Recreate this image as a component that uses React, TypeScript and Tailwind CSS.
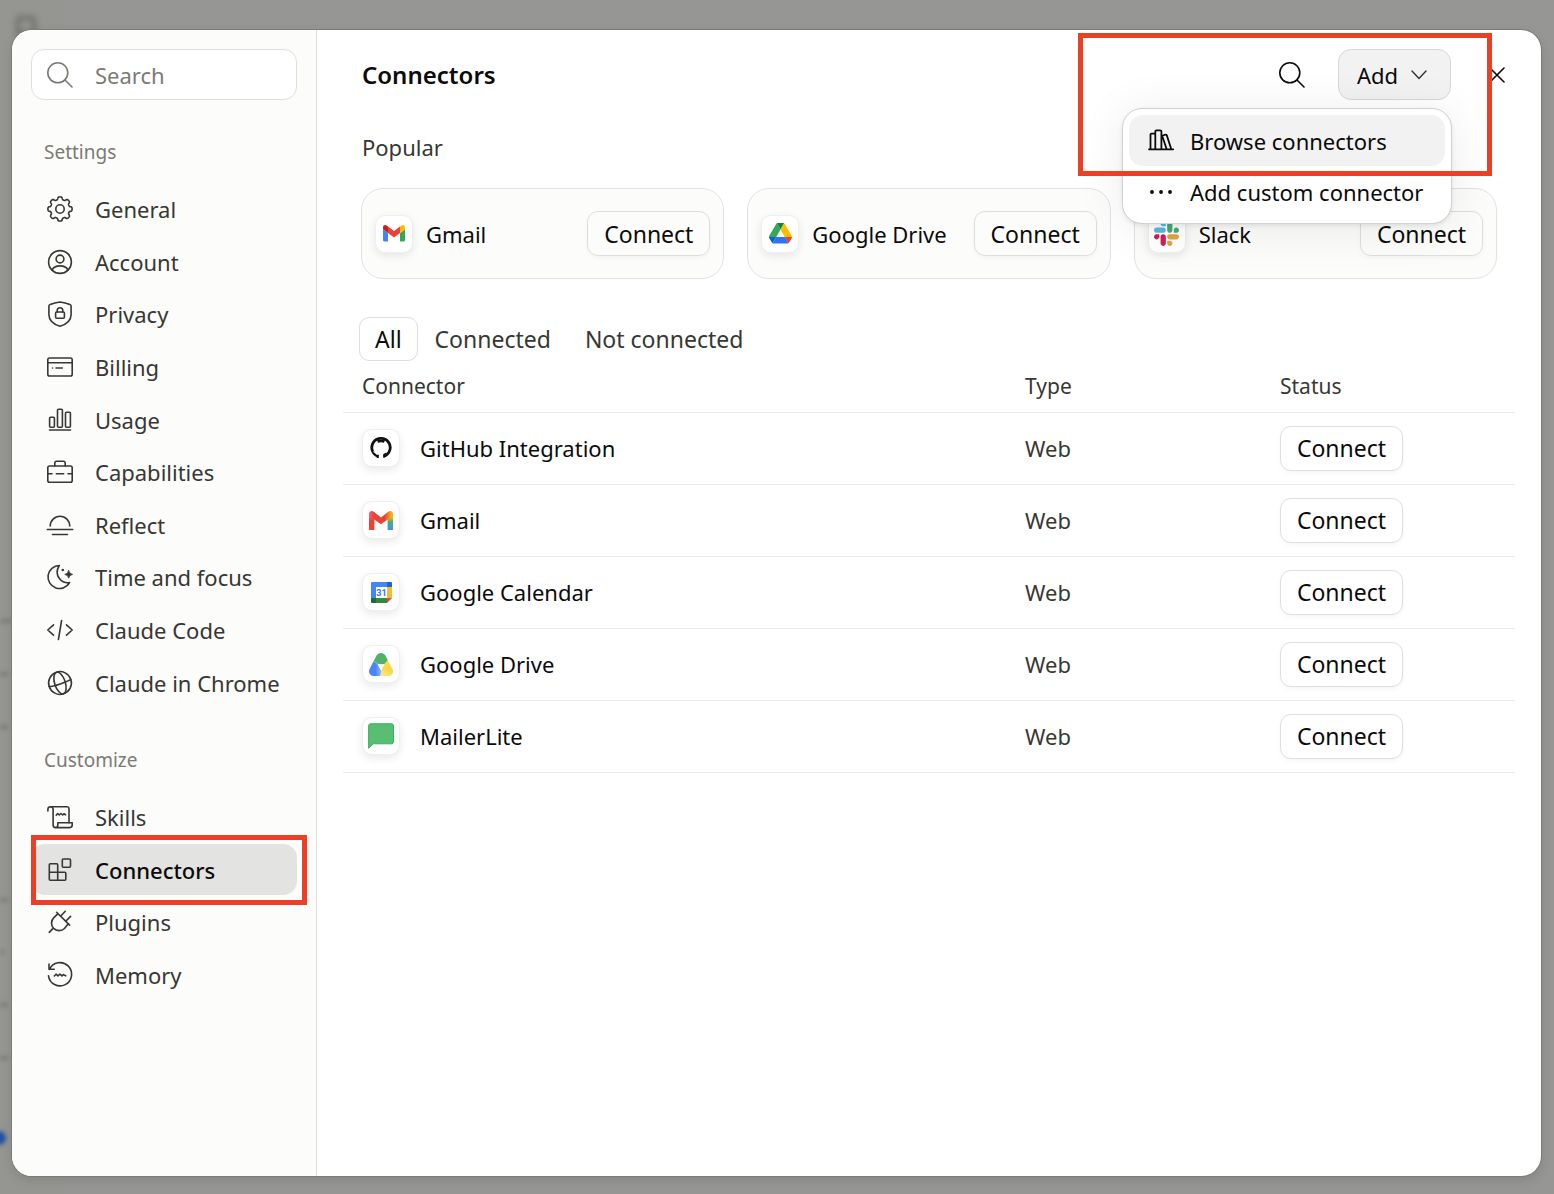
import React from "react";

type NavEntry = { label: string; icon: React.ReactNode; active?: boolean };
type ConnectorRow = { name: string; logo: React.ReactNode };

function Line({ children }: { children: React.ReactNode }) {
  return (
    <svg
      viewBox="0 0 28 28"
      className="size-7 shrink-0"
      fill="none"
      stroke="currentColor"
      strokeWidth="1.6"
      strokeLinecap="round"
      strokeLinejoin="round"
      aria-hidden="true"
    >
      {children}
    </svg>
  );
}

// eight soft teeth around the hub
const gearPoints = Array.from({ length: 192 }, (_, i) => {
  const a = (i / 192) * Math.PI * 2;
  const r = 10.8 + 1.3 * Math.tanh(2.2 * Math.cos(8 * a) + 0.2);
  return `${(14 + r * Math.cos(a)).toFixed(2)},${(14 + r * Math.sin(a)).toFixed(2)}`;
}).join(" ");

const settingsNav: NavEntry[] = [
  {
    label: "General",
    icon: (
      <Line>
        <polygon points={gearPoints} />
        <circle cx="14" cy="14" r="4.2" />
      </Line>
    ),
  },
  {
    label: "Account",
    icon: (
      <Line>
        <circle cx="14" cy="14" r="11.4" />
        <circle cx="14" cy="11" r="3.9" />
        <path d="M6.200 22c1-2.700 4-4.100 7.800-4.100s6.800 1.400 7.800 4.100" />
      </Line>
    ),
  },
  {
    label: "Privacy",
    icon: (
      <Line>
        <path d="M14 2c3.400.4 7 1.300 9.900 2.500a1.800 1.800 0 0 1 1.200 1.700v8.300c0 5.500-4.500 9.700-11.100 11.800C7.400 24.200 2.900 20 2.900 14.500V6.200a1.800 1.800 0 0 1 1.200-1.700C7 3.300 10.600 2.400 14 2z" />
        <rect x="9.600" y="12" width="8.800" height="6.300" rx="1" />
        <path d="M11.200 12v-1.500a2.800 2.800 0 0 1 5.600 0V12" />
      </Line>
    ),
  },
  {
    label: "Billing",
    icon: (
      <Line>
        <rect x="1.800" y="5" width="24.400" height="18" rx="1.800" />
        <path d="M1.800 9.700h24.400M10 15h6.300M6.500 15h.01" />
      </Line>
    ),
  },
  {
    label: "Usage",
    icon: (
      <Line>
        <rect x="3.600" y="11.200" width="4.800" height="10" rx="1" />
        <rect x="11.500" y="3.200" width="4.900" height="18" rx="1" />
        <rect x="19.500" y="6.300" width="4.900" height="14.900" rx="1" />
        <path d="M3.500 24h21" />
      </Line>
    ),
  },
  {
    label: "Capabilities",
    icon: (
      <Line>
        <rect x="1.800" y="8" width="24.400" height="16.300" rx="1.800" />
        <path d="M8.800 8V5a1.800 1.800 0 0 1 1.800-1.800h6.800A1.800 1.800 0 0 1 19.200 5v3M2 15.700h4M10.300 15.700h7.400M22 15.700h4" />
      </Line>
    ),
  },
  {
    label: "Reflect",
    icon: (
      <Line>
        <path d="M4.200 15a9.800 9.800 0 0 1 19.600 0M1.300 18.500h25.400M6.500 23.500h15" />
      </Line>
    ),
  },
  {
    label: "Time and focus",
    icon: (
      <Line>
        <path d="M13.300 2.500A11.500 11.500 0 1 0 23.600 19.500C16.500 20.800 6.800 13 13.300 2.500z" />
        <path d="M22.700 7.600q.5 3.300 3.900 3.800-3.400.5-3.900 3.800-.5-3.300-3.900-3.800 3.400-.5 3.900-3.800z" fill="currentColor" strokeWidth=".8" />
        <circle cx="16.800" cy="7" r="1.300" fill="currentColor" stroke="none" />
      </Line>
    ),
  },
  {
    label: "Claude Code",
    icon: (
      <Line>
        <path d="M7.500 8.800 1.800 14l5.700 5.200M20.500 8.800l5.700 5.200-5.700 5.200M15.600 4.500l-3.200 19" />
      </Line>
    ),
  },
  {
    label: "Claude in Chrome",
    icon: (
      <Line>
        <g transform="rotate(-18 14 14)">
          <circle cx="14" cy="14" r="11.4" />
          <ellipse cx="14" cy="14" rx="5.300" ry="11.4" />
          <path d="M2.600 14c4 1.300 18.800 1.300 22.800 0" />
        </g>
      </Line>
    ),
  },
];

const customizeNav: NavEntry[] = [
  {
    label: "Skills",
    icon: (
      <Line>
        <path d="M1.900 8V6.300a2.600 2.600 0 0 1 5.200 0V22a2.600 2.600 0 0 0 2.600 2.600h14a2.500 2.500 0 0 0 2.500-2.500v-2.400H11.800V22a2.400 2.400 0 0 1-2.100 2.600" />
        <path d="M4.500 3.700H21a2 2 0 0 1 2 2v14M10.200 12.200l1.500-1.700 1.600 1.500 1.700-1.500 1.700 1.500 1.200-1.200 1.600 1" />
      </Line>
    ),
  },
  {
    label: "Connectors",
    active: true,
    icon: (
      <Line>
        <g stroke="#373734">
          <path d="M3.300 8.800a1 1 0 0 1 1-1h6.400a1 1 0 0 1 1 1v7.400h7.100a1 1 0 0 1 1 1v6.100a1 1 0 0 1-1 1H4.300a1 1 0 0 1-1-1zM3.300 16.200h8.400v8.100" />
          <rect x="16.300" y="3" width="8.200" height="8.200" rx="1" />
        </g>
      </Line>
    ),
  },
  {
    label: "Plugins",
    icon: (
      <Line>
        <path d="M3.300 24.400l3.200-3.500M10.600 4.300l13 12.800M12 5.700 7.900 9.600a7.700 7.700 0 0 0-.3 10.800 7.800 7.800 0 0 0 10.900.1l3.700-4.800M14.500 8.200l4.800-4.900M19.700 13.300l4.900-4.900" />
      </Line>
    ),
  },
  {
    label: "Memory",
    icon: (
      <Line>
        <path d="M3 3v5.300h5.200M3.500 8.300A11.600 11.600 0 1 1 2.500 14.800M8.300 15l1.700-1.800 1.900 1.700 2-1.700 2 1.700 1.500-1.300 2.300 1.200" />
      </Line>
    ),
  },
];

function SearchIcon() {
  return (
    <Line>
      <circle cx="11.800" cy="11.800" r="10" />
      <path d="M19 19l7 7" />
    </Line>
  );
}

function GitHub() {
  return (
    <svg viewBox="0 0 22 22" className="w-[22px]" fill="none" aria-hidden="true">
      <path stroke="#111" strokeWidth="2.8" d="M8.200 19.300A9.200 9.200 0 1 1 13.800 19.300" />
      <path fill="#111" d="M7 3h8l-1 2.700q-3-.7-6 0zM6.800 21v-3.500l2 .2V21zM13.200 21v-3.800l3-1.700 1 3z" />
      <path stroke="#fff" strokeWidth="1" d="M3.300 14.600c2 .2 1.800 3 4.600 2.700" />
    </svg>
  );
}

function GmailClassic() {
  return (
    <svg viewBox="52 42 88 66" className="w-[22px]" aria-hidden="true">
      <path fill="#4285f4" d="M58 108h14V74L52 59v43c0 3.320 2.690 6 6 6" />
      <path fill="#34a853" d="M120 108h14c3.320 0 6-2.690 6-6V59l-20 15" />
      <path fill="#fbbc04" d="M120 48v26l20-15v-8c0-7.420-8.470-11.650-14.400-7.200" />
      <path fill="#ea4335" d="M72 74V48l24 18 24-18v26L96 92" />
      <path fill="#c5221f" d="M52 51v8l20 15V48l-5.600-4.200c-5.940-4.450-14.400-.22-14.400 7.200" />
    </svg>
  );
}

function DriveClassic() {
  return (
    <svg viewBox="0 0 87.3 78" className="w-[23px]" aria-hidden="true">
      <path fill="#0066da" d="m6.6 66.85 3.850 6.650c.8 1.400 1.950 2.500 3.300 3.300l13.750-23.800h-27.500c0 1.550.4 3.100 1.200 4.500z" />
      <path fill="#34a853" d="m43.650 25-13.750-23.800c-1.350.8-2.500 1.900-3.300 3.300l-25.400 44a9.060 9.060 0 0 0-1.200 4.500h27.500z" />
      <path fill="#ea4335" d="m73.550 76.800c1.350-.8 2.500-1.900 3.300-3.300l1.600-2.750 7.650-13.250c.8-1.400 1.200-2.950 1.200-4.500h-27.500l5.850 11.500z" />
      <path fill="#188038" d="m43.650 25 13.750-23.800c-1.350-.8-2.900-1.200-4.500-1.200h-18.500c-1.600 0-3.150.45-4.500 1.200z" />
      <path fill="#2f73ee" d="m59.800 53h-32.300l-13.750 23.800c1.350.8 2.900 1.200 4.500 1.200h50.800c1.600 0 3.150-.45 4.500-1.200z" />
      <path fill="#fbbc04" d="m73.400 26.500-12.700-22c-.8-1.400-1.950-2.500-3.300-3.300l-13.750 23.800 16.150 28h27.450c0-1.550-.4-3.100-1.200-4.500z" />
    </svg>
  );
}

function Slack() {
  return (
    <svg viewBox="0 0 122.8 122.8" className="w-[25px]" aria-hidden="true">
      <path fill="#cf1f56" d="M25.800 77.600c0 7.100-5.800 12.900-12.900 12.900S0 84.700 0 77.600s5.800-12.900 12.900-12.900h12.900v12.900zm6.500 0c0-7.100 5.800-12.900 12.900-12.900s12.900 5.800 12.900 12.900v32.300c0 7.100-5.800 12.900-12.900 12.900s-12.900-5.800-12.900-12.900V77.600z" />
      <path fill="#56b9e2" d="M45.200 25.800c-7.100 0-12.900-5.800-12.900-12.900S38.100 0 45.200 0s12.900 5.800 12.900 12.900v12.900H45.200zm0 6.500c7.100 0 12.900 5.800 12.900 12.900s-5.800 12.900-12.900 12.900H12.900C5.800 58.100 0 52.300 0 45.200s5.800-12.900 12.900-12.900h32.300z" />
      <path fill="#4aa978" d="M97 45.200c0-7.100 5.800-12.900 12.900-12.900s12.900 5.800 12.900 12.900-5.800 12.900-12.900 12.900H97V45.200zm-6.500 0c0 7.100-5.800 12.900-12.900 12.900s-12.900-5.800-12.900-12.900V12.900C64.700 5.800 70.500 0 77.600 0s12.900 5.800 12.900 12.900v32.300z" />
      <path fill="#dba73f" d="M77.600 97c7.100 0 12.900 5.800 12.900 12.900s-5.800 12.900-12.900 12.900-12.900-5.800-12.900-12.900V97h12.900zm0-6.500c-7.100 0-12.900-5.800-12.900-12.900s5.800-12.900 12.900-12.900h32.300c7.100 0 12.900 5.800 12.900 12.900s-5.800 12.900-12.900 12.900H77.600z" />
    </svg>
  );
}

function GmailGradient() {
  return (
    <svg viewBox="0 0 24 19" className="w-6" aria-hidden="true">
      <defs>
        <linearGradient id="gm-left" x1="0" y1="0" x2="0" y2="1">
          <stop offset="0" stopColor="#f06aa0" />
          <stop offset=".4" stopColor="#ea4335" />
        </linearGradient>
        <linearGradient id="gm-right" x1="0" y1="0" x2="0" y2="1">
          <stop offset=".15" stopColor="#fbbc04" />
          <stop offset=".5" stopColor="#4fae6a" />
          <stop offset=".9" stopColor="#4a8cf7" />
        </linearGradient>
        <linearGradient id="gm-fold" x1="0" y1="0" x2="1" y2="0">
          <stop offset="0" stopColor="#ee5f8a" />
          <stop offset=".2" stopColor="#ea4335" />
          <stop offset=".65" stopColor="#ea4335" />
          <stop offset=".95" stopColor="#fbb11a" />
        </linearGradient>
      </defs>
      <path fill="url(#gm-left)" d="M0 3h5.400v15.400a.6.6 0 0 1-.6.6H.6a.6.6 0 0 1-.6-.6z" />
      <path fill="url(#gm-right)" d="M18.600 3H24v15.400a.6.6 0 0 1-.6.6h-4.200a.6.6 0 0 1-.6-.6z" />
      <path fill="url(#gm-fold)" d="M0 3.200C0 .4 2.800-.8 4.800.8L12 6.600 19.200.8C21.200-.8 24 .4 24 3.200c0 1.100-.5 1.900-1.300 2.500L12 13.300 1.300 5.700C.5 5.100 0 4.300 0 3.200z" />
    </svg>
  );
}

function Calendar() {
  return (
    <svg viewBox="0 0 21 21" className="w-[21px]" aria-hidden="true">
      <path fill="#4285f4" d="M1 0H16v5H5v11H0V1a1 1 0 0 1 1-1z" />
      <path fill="#1f62d0" d="M16 0h4a1 1 0 0 1 1 1v4h-5z" />
      <path fill="#f5bb30" d="M16 5h5v11h-5z" />
      <path fill="#1d6b37" d="M0 16h5v5H1a1 1 0 0 1-1-1z" />
      <path fill="#34893f" d="M5 16h11v5H5z" />
      <path fill="#e2483a" d="M16 16h5l-5 5z" />
      <path fill="#fff" d="M5 5h11v11H5z" />
      <text x="10.500" y="13.700" textAnchor="middle" fontSize="9" fontWeight="700" fontFamily="Roboto" fill="#2f73ee">
        31
      </text>
    </svg>
  );
}

function DriveGradient() {
  return (
    <svg viewBox="0 0 24 23" className="w-6" aria-hidden="true">
      <defs>
        <linearGradient id="dr-top" x1="0" y1="1" x2=".6" y2=".3">
          <stop offset="0" stopColor="#62c1d0" />
          <stop offset=".45" stopColor="#4fb268" />
        </linearGradient>
        <linearGradient id="dr-blue" x1="0" y1="0" x2="1" y2="0">
          <stop offset=".5" stopColor="#4a86f7" />
          <stop offset="1" stopColor="#9cc3fb" />
        </linearGradient>
        <linearGradient id="dr-yellow" x1="0" y1="1" x2=".5" y2="0">
          <stop offset="0" stopColor="#fbe9a0" />
          <stop offset=".5" stopColor="#fcd94a" />
        </linearGradient>
      </defs>
      <path fill="url(#dr-top)" d="M7.600 2.600a5.100 5.100 0 0 1 8.800 0L18.900 7.200 15.400 11.300H8.600L4.400 8.600z" />
      <path fill="url(#dr-blue)" d="M4.400 8.600 8.600 11.300 13.200 19 11 23H5A4.800 4.800 0 0 1 .7 15.800z" />
      <path fill="url(#dr-yellow)" d="M18.900 7.200 23.400 15.800A4.800 4.800 0 0 1 19 23h-7.400L12 17.300 15.400 11.300z" />
      <path fill="#fff" d="M8.600 11.300h6.800L12 17.300z" />
    </svg>
  );
}

function Mail() {
  return (
    <svg viewBox="0 0 26 26" className="w-[26px]" aria-hidden="true">
      <path fill="#57be72" stroke="#35b35a" d="M2.500.8h21a2 2 0 0 1 2 2v16a2 2 0 0 1-2 2H5.300L.6 25.200V2.800a2 2 0 0 1 2-2z" />
    </svg>
  );
}

const popular: ConnectorRow[] = [
  { name: "Gmail", logo: <GmailClassic /> },
  { name: "Google Drive", logo: <DriveClassic /> },
  { name: "Slack", logo: <Slack /> },
];

const connectors: ConnectorRow[] = [
  { name: "GitHub Integration", logo: <GitHub /> },
  { name: "Gmail", logo: <GmailGradient /> },
  { name: "Google Calendar", logo: <Calendar /> },
  { name: "Google Drive", logo: <DriveGradient /> },
  { name: "MailerLite", logo: <Mail /> },
];

function LogoTile({ children }: { children: React.ReactNode }) {
  return (
    <span className="flex size-[38px] shrink-0 items-center justify-center rounded-[10px] border border-[#efefee] bg-white shadow-[0_3px_8px_rgba(0,0,0,0.09)]">
      {children}
    </span>
  );
}

function ConnectButton({ name }: { name: string }) {
  return (
    <button
      type="button"
      title={`Connect ${name}`}
      className="h-[45px] w-[123px] shrink-0 rounded-[11px] border border-[#dededd] text-[23px] text-[#0b0b0b] shadow-[0_2px_4px_rgba(0,0,0,0.04)]"
    >
      Connect
    </button>
  );
}

function NavGroup({ title, entries, className }: { title: string; entries: NavEntry[]; className: string }) {
  return (
    <section>
      <h2 className="pl-[13px] text-[19px] leading-7 text-[#7b7a75]">{title}</h2>
      <ul className={`mt-[17px] flex flex-col ${className}`}>
        {entries.map((entry) => (
          <li key={entry.label} className="relative flex flex-1 items-center">
            <a
              href="#"
              className={`flex h-[51px] w-full items-center gap-[21px] rounded-[14px] pl-[15px] ${
                entry.active ? "bg-[#e3e3e1] font-medium text-[#0b0b0b]" : "text-[#373734]"
              }`}
            >
              {entry.icon}
              {entry.label}
            </a>
            {entry.active && (
              <span className="pointer-events-none absolute -top-[9px] -right-[10px] -bottom-[9px] left-0 border-5 border-[#ea4025]" />
            )}
          </li>
        ))}
      </ul>
    </section>
  );
}

function Sidebar() {
  return (
    <aside className="w-[305px] shrink-0 border-r border-[#dededd] bg-[#fcfcfa] px-[19px] pt-[19px]">
      <label className="flex h-[51px] items-center gap-[21px] rounded-[13px] border border-[#dededd] bg-white pl-[14px] text-[#7b7a75]">
        <SearchIcon />
        <input type="text" placeholder="Search" aria-label="Search" className="w-full min-w-0 outline-none placeholder:text-[#7b7a75]" />
      </label>
      <nav className="mt-[38px] flex flex-col gap-[37px]">
        <NavGroup title="Settings" entries={settingsNav} className="min-h-[526px]" />
        <NavGroup title="Customize" entries={customizeNav} className="min-h-[210px]" />
      </nav>
    </aside>
  );
}

function AddMenu() {
  return (
    <div className="relative">
      <button
        type="button"
        aria-expanded="true"
        className="flex h-[51px] w-[113px] items-center gap-[13px] rounded-[13px] border border-[#d6d6d5] bg-[#f2f2f2] pl-[18px] text-[#0b0b0b]"
      >
        Add
        <svg viewBox="0 0 16 10" className="w-4" fill="none" stroke="#333" strokeWidth="1.4" strokeLinecap="round" strokeLinejoin="round" aria-hidden="true">
          <path d="M1 1l7 7.500L15 1" />
        </svg>
      </button>
      <div
        role="menu"
        className="absolute top-[59px] -right-px z-10 w-[330px] rounded-[20px] border border-[#d0d0cf] bg-white bg-clip-padding p-[6px] text-[#0b0b0b] shadow-[0_4px_48px_rgba(0,0,0,0.08),0_2px_4px_rgba(0,0,0,0.08)]"
      >
        <button type="button" role="menuitem" className="flex h-[51px] w-full items-center gap-[15px] rounded-[14px] bg-[#f2f2f2] pl-[18px] whitespace-nowrap">
          <Line>
            <path d="M2 22.300h24.200M3.500 22.300V7.600a1 1 0 0 1 1-1h3.800M8.300 22.300V4.500a1.200 1.200 0 0 1 1.200-1.200h3.700a1.200 1.200 0 0 1 1.200 1.200v17.800M14.400 9l4.100-1.300a1 1 0 0 1 1.300.7l4.500 13.900M15.500 9.800l4.200 12.500" strokeWidth="1.8" />
          </Line>
          Browse connectors
        </button>
        <button type="button" role="menuitem" className="flex h-[51px] w-full items-center gap-[15px] rounded-[14px] pl-[18px] whitespace-nowrap">
          <Line>
            <path d="M5 14h.01M14 14h.01M23 14h.01" strokeWidth="3.800" />
          </Line>
          Add custom connector
        </button>
      </div>
    </div>
  );
}

function Header() {
  return (
    <header className="relative flex items-center pt-[19px] pr-5 pl-[45px]">
      <h1 className="flex-1 text-2xl font-semibold text-[#0b0b0b]">Connectors</h1>
      <div className="flex items-center gap-[22px] text-[#0b0b0b]">
        <button type="button" aria-label="Search connectors" className="flex size-12 items-center justify-center">
          <SearchIcon />
        </button>
        <AddMenu />
        <button type="button" aria-label="Close" className="flex size-12 items-center justify-center">
          <svg viewBox="0 0 16 16" className="size-4" stroke="currentColor" strokeWidth="1.6" strokeLinecap="round" aria-hidden="true">
            <path d="M1 1l14 14M15 1L1 15" />
          </svg>
        </button>
      </div>
      <span className="pointer-events-none absolute top-[3px] right-[49px] z-20 h-[143px] w-[414px] border-5 border-[#ea4025]" />
    </header>
  );
}

function ConnectorTable() {
  return (
    <table className="w-full table-fixed border-collapse text-left">
      <thead>
        <tr className="h-[51px] border-b border-[#ebebea] text-[21px] text-[#373734]">
          <th className="pl-[19px] font-normal">Connector</th>
          <th className="w-[255px] font-normal">Type</th>
          <th className="w-[235px] font-normal">Status</th>
        </tr>
      </thead>
      <tbody>
        {connectors.map((row) => (
          <tr key={row.name} className="h-[72px] border-b border-[#ebebea]">
            <td className="pl-[19px]">
              <div className="flex items-center gap-5 text-[#0b0b0b]">
                <LogoTile>{row.logo}</LogoTile>
                {row.name}
              </div>
            </td>
            <td className="text-[#373734]">Web</td>
            <td>
              <ConnectButton name={row.name} />
            </td>
          </tr>
        ))}
      </tbody>
    </table>
  );
}

function App() {
  return (
    <div className="relative flex min-h-screen overflow-hidden bg-[#969695] pt-[30px] pr-[13px] pb-[18px] pl-3 font-['Noto_Sans',sans-serif] text-[22px] leading-8">
      {/* page dimmed behind the dialog */}
      <div className="absolute inset-y-0 left-0 w-16 bg-[#959591]" aria-hidden="true">
        <div className="absolute top-4 left-4 h-5 w-5 rounded border-4 border-[#6b6b69] blur-[3px]" />
        <div className="absolute top-[619px] left-0 h-1 w-3 bg-[#7d7d7a] blur-[2px]" />
        <div className="absolute top-[672px] left-0 h-1 w-2 bg-[#7d7d7a] blur-[2px]" />
        <div className="absolute top-[725px] left-0 h-1 w-2 bg-[#7d7d7a] blur-[2px]" />
        <div className="absolute top-[898px] left-0 h-1 w-2 bg-[#7d7d7a] blur-[2px]" />
        <div className="absolute top-[950px] left-0 h-1 w-1 bg-[#7d7d7a] blur-[2px]" />
        <div className="absolute top-[1003px] left-0 h-1 w-2 bg-[#7d7d7a] blur-[2px]" />
        <div className="absolute top-[1056px] left-0 h-1 w-2 bg-[#7d7d7a] blur-[2px]" />
        <div className="absolute top-[1131px] -left-2 size-3.5 rounded-full bg-[#1f4fa5] blur-[2px]" />
      </div>
      <div className="relative flex flex-1 overflow-hidden rounded-[20px] bg-white shadow-[0_0_0_1px_#7b7b7a,0_4px_12px_rgba(0,0,0,0.12)]">
        <Sidebar />
        <main className="min-w-0 flex-1">
          <Header />
          <section className="px-11 pt-[31px]">
            <h2 className="pl-px text-[#373734]">Popular</h2>
            <div className="mt-[25px] grid grid-cols-3 gap-[23px]">
              {popular.map((item) => (
                <article key={item.name} className="flex h-[91px] items-center rounded-[22px] border border-[#e2e2e1] bg-[#fcfcfa] px-[13px]">
                  <LogoTile>{item.logo}</LogoTile>
                  <p className="min-w-0 flex-1 pl-[13px] text-[#0b0b0b]">{item.name}</p>
                  <ConnectButton name={item.name} />
                </article>
              ))}
            </div>
          </section>
          <div className="mt-[38px] flex pl-[42px] text-[23px] text-[#373734]">
            <button type="button" className="h-11 rounded-[10px] border border-[#dededd] px-[15px] text-[#0b0b0b]">
              All
            </button>
            <button type="button" className="h-11 px-[17px]">
              Connected
            </button>
            <button type="button" className="h-11 px-[17px]">
              Not connected
            </button>
          </div>
          <div className="px-[26px]">
            <ConnectorTable />
          </div>
        </main>
      </div>
    </div>
  );
}

export default App;
